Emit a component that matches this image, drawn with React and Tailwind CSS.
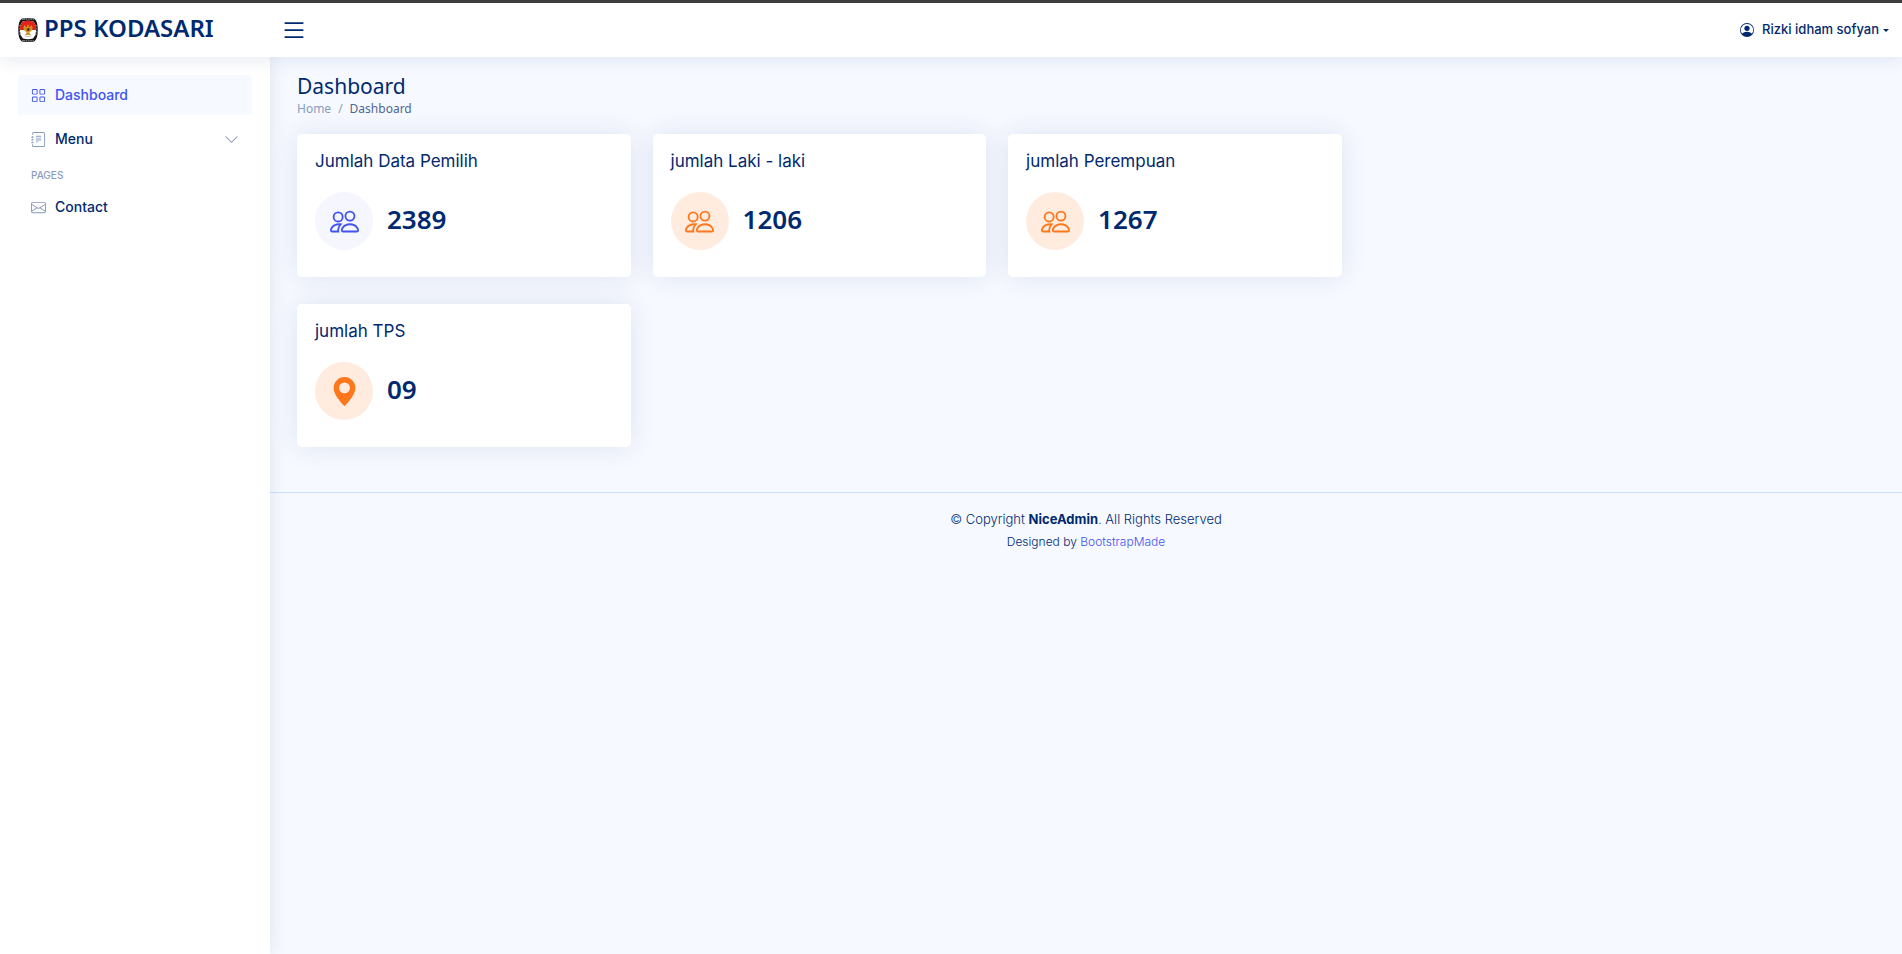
import React from "react";
import {
  BsPeople,
  BsGeoAltFill,
  BsPersonCircle,
  BsList,
  BsGrid,
  BsJournalText,
  BsEnvelope,
  BsChevronDown,
} from "react-icons/bs";

const cards = [
  { title: "Jumlah Data Pemilih", value: "2389", Icon: BsPeople, tone: "bg-[#f6f6fe] text-[#4154f1]" },
  { title: "jumlah Laki - laki", value: "1206", Icon: BsPeople, tone: "bg-[#ffecdf] text-[#ff771d]" },
  { title: "jumlah Perempuan", value: "1267", Icon: BsPeople, tone: "bg-[#ffecdf] text-[#ff771d]" },
  { title: "jumlah TPS", value: "09", Icon: BsGeoAltFill, tone: "bg-[#ffecdf] text-[#ff771d]" },
];

function Emblem() {
  return (
    <svg viewBox="0 0 40 48" className="h-6 w-5 shrink-0" aria-hidden="true">
      <path d="M8 1Q20-1 32 1Q36 3 38 10Q41 24 38 38Q36 45 32 47Q20 49 8 47Q4 45 2 38Q-1 24 2 10Q4 3 8 1Z" fill="#151313" />
      <path d="M9 3Q20 1 31 3M9 45Q20 47 31 45" fill="none" stroke="#e8e8e8" strokeWidth="2" strokeDasharray="2 1.5" />
      <path d="M2.500 14V34M37.500 14V34" stroke="#9d9d9d" strokeWidth="1.500" strokeDasharray="3 3" />
      <path d="M9 7Q20 4 31 7L35 14Q37.500 24 35 34L30 41Q20 44 10 41L5 34Q2.500 24 5 14Z" fill="#fff" />
      <path d="M9 7Q20 4 31 7L35 14Q36.500 19 36 24H4Q3.500 19 5 14Z" fill="#e0241a" />
      <path d="M20 13L21.500 15L21 19Q25 19 27 14Q30 19 28 24Q26 28 23 28L23 31L26 34H14L17 31L17 28Q14 28 12 24Q10 19 13 14Q15 19 19 19L18 15Z" fill="#d9a322" />
      <path d="M13 19L17 25M27 19L23 25M15 33L19 31M25 33L21 31" stroke="#80560f" strokeWidth="1.200" />
      <path d="M17.500 20.500H22.500V25L20 27.500L17.500 25Z" fill="#a8321a" />
      <path d="M20 20.500H22.500V24H20Z" fill="#2b2016" />
      <path d="M13 36Q20 38.500 27 36" fill="none" stroke="#b9b4a8" strokeWidth="1.500" />
    </svg>
  );
}

function StatCard({ title, value, Icon, tone }) {
  return (
    <article className="rounded-[5px] bg-white px-[18px] pt-[17px] pb-[27px] shadow-[0_0_27px_rgba(1,41,112,0.1)]">
      <h2 className="mb-[21px] text-[17px] leading-5 font-normal">{title}</h2>
      <div className="flex gap-[14px]">
        <span className={`flex size-[58px] shrink-0 items-center justify-center rounded-full ${tone}`}>
          <Icon className="size-[29px]" />
        </span>
        <span className="font-['Noto_Sans',sans-serif] text-[26px] leading-[54px] font-semibold">{value}</span>
      </div>
    </article>
  );
}

export default function App() {
  return (
    <div className="flex min-h-screen flex-col bg-[#f6f9ff] font-['Inter',sans-serif] text-[#012970]">
      <header className="relative z-20 flex h-[57px] shrink-0 items-center border-t-[3px] border-[#3d3d3d] bg-white pr-[13px] pl-[18px] shadow-[0_2px_18px_rgba(1,41,112,0.1)]">
        <a href="#" className="flex w-[262px] items-center gap-[6px]">
          <Emblem />
          <span className="pb-1 font-['Noto_Sans',sans-serif] text-2xl leading-7 font-semibold whitespace-nowrap">PPS KODASARI</span>
        </a>
        <button type="button" aria-label="Toggle sidebar">
          <BsList className="size-7" />
        </button>
        <button type="button" className="ml-auto flex items-center text-[13px] font-medium">
          <BsPersonCircle className="mr-2 size-[14px]" />
          Rizki idham sofyan
          <span className="ml-1 border-x-[3px] border-t-[3px] border-x-transparent border-t-current" />
        </button>
      </header>

      <div className="flex grow">
        <aside className="relative z-10 w-[270px] shrink-0 bg-white px-[18px] pt-[18px] shadow-[0_0_18px_rgba(1,41,112,0.1)]">
          <nav className="text-sm font-medium">
            <a href="#" className="mb-1 flex h-10 items-center gap-[9px] rounded bg-[#f6f9ff] px-[13px] text-[#4154f1]">
              <BsGrid className="size-[15px]" />
              Dashboard
            </a>
            <button type="button" className="flex h-10 w-full items-center gap-[9px] px-[13px]">
              <BsJournalText className="size-[15px] text-[#899bbd]" />
              Menu
              <BsChevronDown className="ml-auto size-[15px] text-[#899bbd]" />
            </button>
            <h2 className="mt-[9px] mb-1 px-[13px] text-[10px] leading-[15px] text-[#899bbd]">PAGES</h2>
            <a href="#" className="flex h-10 items-center gap-[9px] px-[13px]">
              <BsEnvelope className="size-[15px] text-[#899bbd]" />
              Contact
            </a>
          </nav>
        </aside>

        <div className="min-w-0 grow">
          <main className="px-[27px] pt-4 pb-[45px]">
            <div className="mb-4 font-['Noto_Sans',sans-serif]">
              <h1 className="text-[21px] leading-[26px]">Dashboard</h1>
              <nav aria-label="Breadcrumb" className="flex gap-[7px] text-xs leading-[19px] text-[#899bbd]">
                <a href="#">Home</a>
                <span>/</span>
                <span className="text-[#51678f]">Dashboard</span>
              </nav>
            </div>
            <div className="grid grid-cols-3 gap-[22px]">
              <section className="col-span-2 grid grid-cols-3 gap-x-[22px] gap-y-[27px]">
                {cards.map((card) => (
                  <StatCard key={card.title} {...card} />
                ))}
              </section>
            </div>
          </main>
          <footer className="border-t border-[#cddfff] py-[17px] text-center font-light">
            <p className="text-[13px] leading-[19px]">
              © Copyright <strong className="font-bold">NiceAdmin</strong>. All Rights Reserved
            </p>
            <p className="pt-1 text-xs leading-[18px]">
              Designed by <a href="#" className="text-[#4154f1]">BootstrapMade</a>
            </p>
          </footer>
        </div>
      </div>
    </div>
  );
}
